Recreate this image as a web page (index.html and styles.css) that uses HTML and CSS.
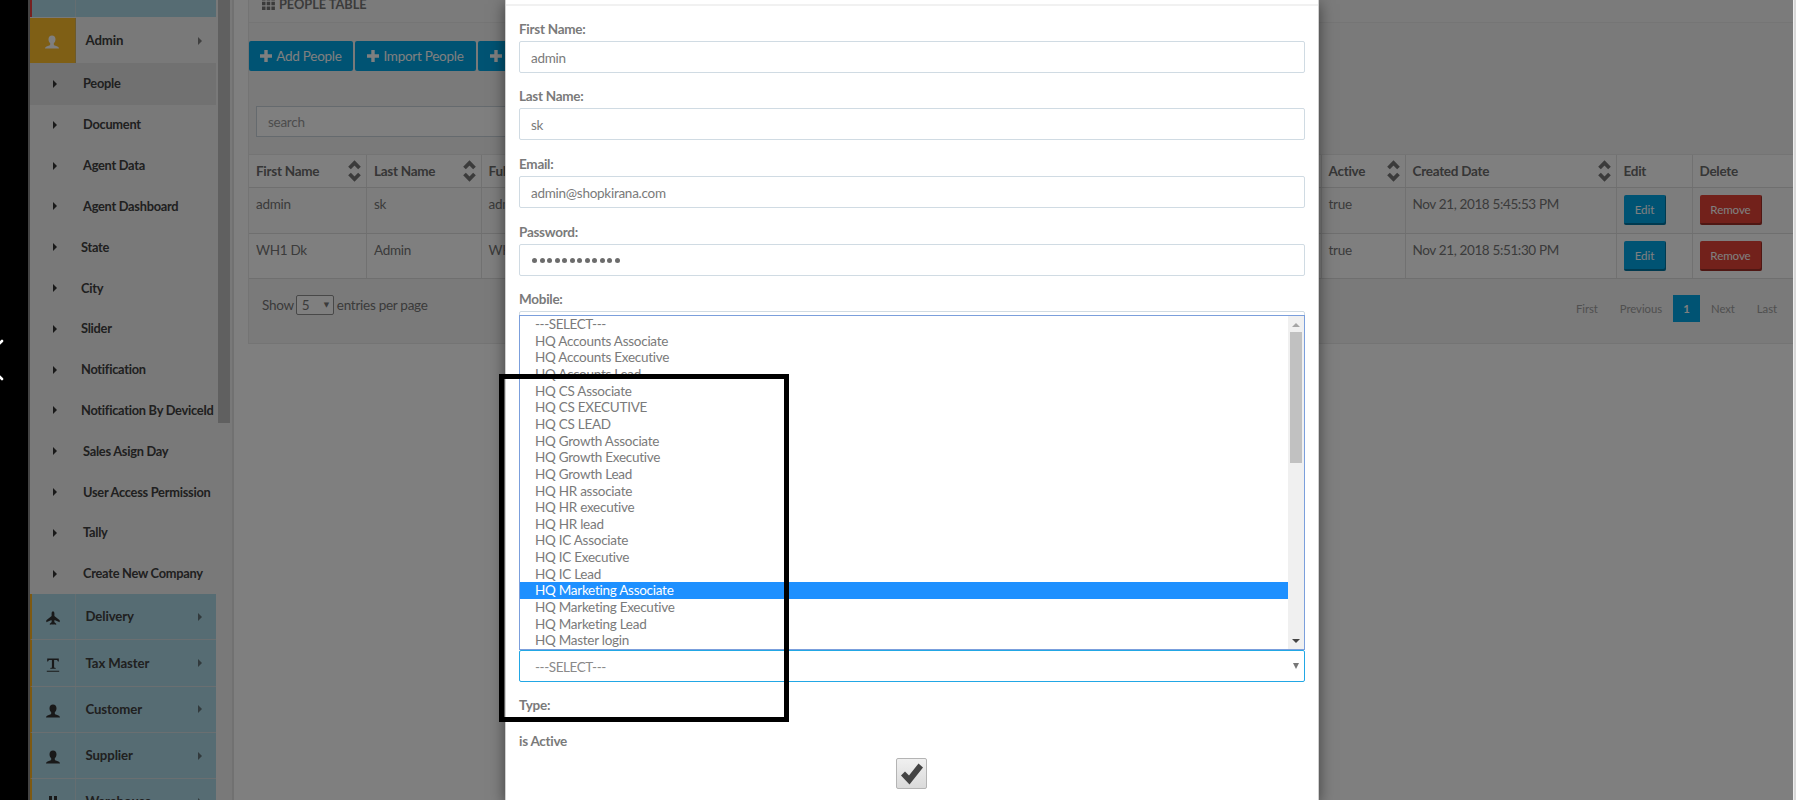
FILE: index.html
```html
<!DOCTYPE html>
<html lang="en">
<head>
<meta charset="utf-8">
<title>People Table</title>
<link rel="stylesheet" href="styles.css">
</head>
<body>
<svg class="defs" aria-hidden="true">
  <symbol id="user" viewBox="0 0 14 14"><path d="M7 .5c2.200 0 3.500 1.500 3.500 3.700 0 1.800-.8 3.300-1.700 4.100v1.100c0 .5.500.8 1.700 1.300 1.800.7 3.500 1 3.500 2.800H0c0-1.800 1.700-2.100 3.500-2.800 1.200-.5 1.700-.8 1.700-1.300V8.300C4.300 7.500 3.500 6 3.500 4.200 3.500 2 4.800.5 7 .5z"/></symbol>
  <symbol id="plane" viewBox="0 0 14 14"><path d="M7 .3c.8 0 1.400 1 1.400 2.200v2.500l5.300 4.200v2L8.500 8.900l-.2 2.200 1.900 1.600v1.100L7.600 13.200 7 14l-.6-.8-2.600.6v-1.100l1.900-1.600-.2-2.200L.3 11.200v-2L5.600 5V2.500C5.600 1.300 6.200.3 7 .3z"/></symbol>
  <symbol id="text" viewBox="0 0 14 14"><path d="M1.200.5h11.600v3h-.9c-.1-1.100-.6-1.600-1.700-1.600H8.100v7.200c0 .7.500.9 1.600.9v.8H4.300V10c1.100 0 1.600-.2 1.600-.9V1.900H3.800c-1.100 0-1.600.5-1.700 1.600h-.9zM.8 12.700h12.400v1H.8z"/></symbol>
  <symbol id="home" viewBox="0 0 14 14"><path d="M3 0h3v14H3zM8 0h3v14H8z"/></symbol>
  <symbol id="plus" viewBox="0 0 12 12"><path d="M4.300 0h3.400v4.300H12v3.400H7.700V12H4.300V7.700H0V4.300h4.300z"/></symbol>
  <symbol id="sort" viewBox="0 0 13 22"><path d="M1.500 8l5-5 5 5M1.500 14l5 5 5-5" fill="none" stroke="currentColor" stroke-width="3.800"/></symbol>
</svg>

<div class="app">
  <div class="rail"><svg width="4" height="42" viewBox="0 0 4 42"><path d="M-1 5l3-3M-1 37l3 3" stroke="#fff" stroke-width="2.600" stroke-linecap="round"/></svg></div>

  <nav class="sidebar">
    <ul class="menu">
      <li class="group first"><i class="ic"></i></li>
      <li class="group open"><i class="ic"><svg><use href="#user"/></svg></i><span>Admin</span><b class="caret"></b></li>
      <li class="item active"><b class="caret"></b><span>People</span></li>
      <li class="item"><b class="caret"></b><span>Document</span></li>
      <li class="item"><b class="caret"></b><span>Agent Data</span></li>
      <li class="item"><b class="caret"></b><span>Agent Dashboard</span></li>
      <li class="item near"><b class="caret"></b><span>State</span></li>
      <li class="item near"><b class="caret"></b><span>City</span></li>
      <li class="item near"><b class="caret"></b><span>Slider</span></li>
      <li class="item near"><b class="caret"></b><span>Notification</span></li>
      <li class="item near"><b class="caret"></b><span>Notification By DeviceId</span></li>
      <li class="item"><b class="caret"></b><span>Sales Asign Day</span></li>
      <li class="item"><b class="caret"></b><span>User Access Permission</span></li>
      <li class="item"><b class="caret"></b><span>Tally</span></li>
      <li class="item"><b class="caret"></b><span>Create New Company</span></li>
      <li class="group"><i class="ic"><svg><use href="#plane"/></svg></i><span>Delivery</span><b class="caret"></b></li>
      <li class="group"><i class="ic"><svg><use href="#text"/></svg></i><span>Tax Master</span><b class="caret"></b></li>
      <li class="group"><i class="ic"><svg><use href="#user"/></svg></i><span>Customer</span><b class="caret"></b></li>
      <li class="group"><i class="ic"><svg><use href="#user"/></svg></i><span>Supplier</span><b class="caret"></b></li>
      <li class="group"><i class="ic"><svg><use href="#home"/></svg></i><span>Warehouse</span><b class="caret"></b></li>
    </ul>
    <div class="sidescroll"></div>
  </nav>

  <main class="main">
    <section class="panel">
      <header class="panel-head"><svg width="13" height="13" viewBox="0 0 13 13"><path d="M0 0h3.500v3.500H0zM4.700 0h3.500v3.500H4.700zM9.400 0h3.500v3.500H9.400zM0 4.700h3.500v3.500H0zM4.700 4.700h3.500v3.500H4.700zM9.400 4.700h3.500v3.500H9.400zM0 9.400h3.500v3.500H0zM4.700 9.400h3.500v3.500H4.700zM9.400 9.400h3.500v3.500H9.400z"/></svg>PEOPLE TABLE</header>
      <div class="actions">
        <button class="add w1"><svg><use href="#plus"/></svg>Add People</button>
        <button class="add w2"><svg><use href="#plus"/></svg>Import People</button>
        <button class="add w3"><svg><use href="#plus"/></svg></button>
      </div>
      <div class="search">search</div>
      <div class="table">
        <div class="tr th"><div>First Name<svg><use href="#sort"/></svg></div><div>Last Name<svg><use href="#sort"/></svg></div><div>Full Name</div><div>Active<svg><use href="#sort"/></svg></div><div>Created Date<svg><use href="#sort"/></svg></div><div>Edit</div><div>Delete</div></div>
        <div class="tr"><div>admin</div><div>sk</div><div>admin sk</div><div>true</div><div class="date">Nov 21, 2018 5:45:53 PM</div><div><button class="edit">Edit</button></div><div><button class="remove">Remove</button></div></div>
        <div class="tr"><div>WH1 Dk</div><div>Admin</div><div>WH1 Dk</div><div>true</div><div class="date">Nov 21, 2018 5:51:30 PM</div><div><button class="edit">Edit</button></div><div><button class="remove">Remove</button></div></div>
      </div>
      <footer class="foot">
        <div class="show">Show<span class="num">5<b>▼</b></span>entries per page</div>
        <div class="pages"><span>First</span><span>Previous</span><span class="cur">1</span><span>Next</span><span>Last</span></div>
      </footer>
    </section>
  </main>
  <div class="edge"></div>
</div>

<div class="backdrop"></div>

<div class="modal">
  <div class="modal-head"></div>
  <form class="form">
    <div class="field"><label>First Name:</label><div class="input">admin</div></div>
    <div class="field"><label>Last Name:</label><div class="input">sk</div></div>
    <div class="field"><label>Email:</label><div class="input">admin@shopkirana.com</div></div>
    <div class="field"><label>Password:</label><div class="input dots"><i></i><i></i><i></i><i></i><i></i><i></i><i></i><i></i><i></i><i></i><i></i><i></i></div></div>
    <div class="field"><label>Mobile:</label><div class="input cut"></div></div>
    <div class="list">
      <ul>
        <li class="wide">---SELECT---</li><li>HQ Accounts Associate</li><li>HQ Accounts Executive</li><li>HQ Accounts Lead</li><li>HQ CS Associate</li><li>HQ CS EXECUTIVE</li><li>HQ CS LEAD</li><li>HQ Growth Associate</li><li>HQ Growth Executive</li><li>HQ Growth Lead</li><li>HQ HR associate</li><li>HQ HR executive</li><li>HQ HR lead</li><li>HQ IC Associate</li><li>HQ IC Executive</li><li>HQ IC Lead</li><li class="sel">HQ Marketing Associate</li><li>HQ Marketing Executive</li><li>HQ Marketing Lead</li><li>HQ Master login</li>
      </ul>
      <div class="bar"><b class="up"></b><div class="thumb"></div><b class="down"></b></div>
    </div>
    <div class="select"><span class="wide">---SELECT---</span><b></b></div>
    <div class="type">Type:</div>
    <div class="isactive">is Active</div>
    <div class="check"><svg width="24" height="24" viewBox="0 0 24 24"><path d="M1 13.500L5 9.500l4 4L18.500 1.500 23 5.500 9.500 22.500z" fill="#444"/></svg></div>
  </form>
</div>
<div class="mark"></div>
</body>
</html>
```

FILE: styles.css
```css
* { box-sizing: border-box; }
body { margin: 0; width: 1796px; height: 800px; overflow: hidden; position: relative; font: 13.500px/20px Lato, "Liberation Sans", sans-serif; letter-spacing: -.27px; color: #7a7a7a; background: #fff; }
ul { margin: 0; padding: 0; list-style: none; }
button { font: inherit; letter-spacing: inherit; border: 0; padding: 0; }
.defs { position: absolute; width: 0; height: 0; }
.app { display: flex; height: 800px; }

.rail { width: 28px; background: #000; padding-top: 339px; }
.rail svg { display: block; }
.sidebar { width: 206px; display: flex; background: #f2f2f2; border-left: 2px solid #868686; border-right: 2px solid #e3e3e3; color: #404040; font-weight: 700; font-size: 13.200px; letter-spacing: -.1px; overflow: hidden; }
.menu { width: 186px; margin-right: 2px; flex: none; }
.sidescroll { width: 12px; height: 423px; background: #c1c1c1; }
.group { display: flex; align-items: center; height: 46.300px; background: #add8e6; border-left: 2px solid #fcb322; border-bottom: 1px solid #d4dfe3; fill: #333; }
.group .ic { align-self: stretch; width: 44px; border-right: 1px solid #c9dce2; display: flex; align-items: center; justify-content: center; padding-right: 2px; padding-top: 3px; }
.group svg { width: 14px; height: 14px; }
.group span { flex: 1; padding: 0 0 1px 9.500px; }
.group .caret { margin-right: 14px; opacity: .6; }
.group.first { height: 17px; border-color: #ef4040; border-bottom: 0; margin-bottom: 1px; }
.group.open { height: 45px; background: #f2f2f2; border: 0; }
.group.open .ic { width: 46px; background: #ffbe2a; fill: #fff; border-right-color: #d9b45a; padding-right: 1px; }
.caret { width: 0; height: 0; border-left: 4px solid #333; border-top: 4px solid transparent; border-bottom: 4px solid transparent; }
.item { display: flex; align-items: center; height: 40.800px; padding-left: 23px; white-space: nowrap; font-size: 12.800px; letter-spacing: -.26px; }
.item.active { height: 41.500px; background: #e2e2e2; }
.item span { margin-left: 26px; padding-bottom: 1px; }
.item.near span { margin-left: 24px; }

.main { flex: 1; padding-left: 14px; min-width: 0; overflow: hidden; }
.panel { height: 344px; background: #f4f4f4; border: 1px solid #e8e8e8; border-top: 0; border-right: 0; color: #767676; }
.panel-head { height: 23px; border-bottom: 1px solid #eaeaea; background: #f6f6f6; padding: 0 0 0 13px; display: flex; align-items: flex-start; font-weight: 700; font-size: 12.800px; line-height: 9px; letter-spacing: -.05px; gap: 4px; }
.panel-head svg { margin-top: -3px; fill: #767676; }
.actions { display: flex; gap: 2px; padding-top: 18px; height: 48px; }
.add { width: 104px; height: 30px; background: #00a6e6; color: #fff; border-radius: 2px; display: flex; align-items: center; justify-content: center; gap: 4px; }
.add svg { width: 12px; height: 12px; fill: #fff; margin-bottom: 1px; }
.w2 { width: 121px; }
.w3 { width: 104px; justify-content: flex-start; padding-left: 12px; }
.search { width: 600px; margin: 35px 7px 0; height: 31px; background: #fff; border: 1px solid #cbd5dd; padding: 5px 11px; color: #999; }
.table { margin-top: 17px; background: #fff; border-top: 1px solid #e8e8e8; }
.tr { display: grid; grid-template-columns: 117px 114.500px 840px 84px 211px 76px 1fr; height: 45.500px; border-bottom: 1px solid #dedede; }
.tr > div { border-left: 1px solid #e2e2e2; padding: 6px 0 0 7px; position: relative; white-space: nowrap; overflow: hidden; }
.tr > div:first-child { border-left: 0; }
.tr:nth-child(2) { background: #fbfbfb; }
.tr .date { letter-spacing: -.36px; }
.th { height: 33px; font-weight: 700; color: #6c6c6c; }
.th svg { position: absolute; right: 5px; top: 5px; width: 13px; height: 22px; color: #777; }
.edit, .remove { width: 42px; height: 30px; margin-top: 1px; background: #00a6e6; color: #fff; font-size: 11.600px; letter-spacing: -.1px; border-radius: 2px; box-shadow: inset -1px -2px 0 rgba(0,0,0,.3); display: block; }
.remove { width: 62px; background: #e44237; }
.foot { display: flex; justify-content: space-between; padding: 16px 5px 0 13px; }
.show { display: flex; align-items: center; height: 20px; }
.num { width: 38px; height: 20px; margin: 0 3px 0 2px; border: 1px solid #909090; background: #fff; display: flex; align-items: center; justify-content: space-between; padding: 0 4px 0 5px; border-radius: 2px; }
.num b { font-size: 7px; font-family: "DejaVu Sans", sans-serif; }
.pages { display: flex; font-size: 11.300px; letter-spacing: -.05px; color: #a0a0a0; line-height: 27px; }
.pages span { padding: 0 11px; height: 27px; }
.pages .cur { width: 27px; background: #00a6e6; color: #fff; font-weight: 700; padding: 0; text-align: center; }
.edge { width: 3px; background: #d8d8d8; border-left: 1px solid #eee; }

.backdrop { position: absolute; inset: 0 3px 0 28px; background: rgba(0,0,0,.5); }
.modal { position: absolute; left: 505px; top: 0; width: 814px; height: 800px; background: #fff; box-shadow: 0 4px 14px rgba(0,0,0,.5); border: solid #d0d0d0; border-width: 0 1px; }
.modal-head { height: 6px; border-bottom: 2px solid #f1f1f1; }
.form { padding: 12.500px 13px 0; }
.field { height: 67.700px; }
.field label, .type, .isactive { display: block; font-weight: 700; height: 20px; }
.input { height: 32px; margin-top: 2px; border: 1px solid #d0dbe3; border-radius: 2px; padding: 6px 11px; line-height: 20px; }
.field:nth-child(5) { height: 25.700px; overflow: hidden; }
.dots { display: flex; gap: 2.550px; align-items: center; padding-top: 8px; padding-left: 12px; }
.dots i { width: 5px; height: 5px; border-radius: 50%; background: #6c6c6c; }
.list { height: 335px; border: 1px solid #7b9fdc; display: flex; }
.list ul { flex: 1; }
.list li { height: 16.660px; line-height: 16px; padding-left: 15px; }
.wide { letter-spacing: -.42px; }
.list .sel { background: #1e90ff; color: #fff; }
.bar { width: 16px; background: #f0f0f0; display: flex; flex-direction: column; align-items: center; padding: 7px 0 6px 0; }
.up, .down { width: 0; height: 0; border: solid transparent; border-width: 0 4px 4px; border-bottom-color: #a5a5a5; }
.down { border-width: 4px 4px 0; border-top-color: #444; margin-top: auto; }
.thumb { width: 12px; height: 131px; background: #c1c1c1; margin-top: 5px; }
.select { height: 32px; border: 1px solid #22a7e5; border-radius: 2px; padding: 6px 5px 0 15px; display: flex; justify-content: space-between; color: #8a8a8a; }
.select b { width: 0; height: 0; margin-top: 6px; border: solid transparent; border-width: 6px 3px 0; border-top-color: #777; }
.type { margin-top: 13px; }
.isactive { margin-top: 16px; }
.check { width: 31px; height: 31px; margin: 7px 0 0 377px; border: 1px solid #b4b4b4; border-radius: 2px; background: linear-gradient(#f0f0f0, #dadada); padding: 3px; }
.mark { position: absolute; left: 499px; top: 374px; width: 290px; height: 348px; border: 5px solid #000; }
```
